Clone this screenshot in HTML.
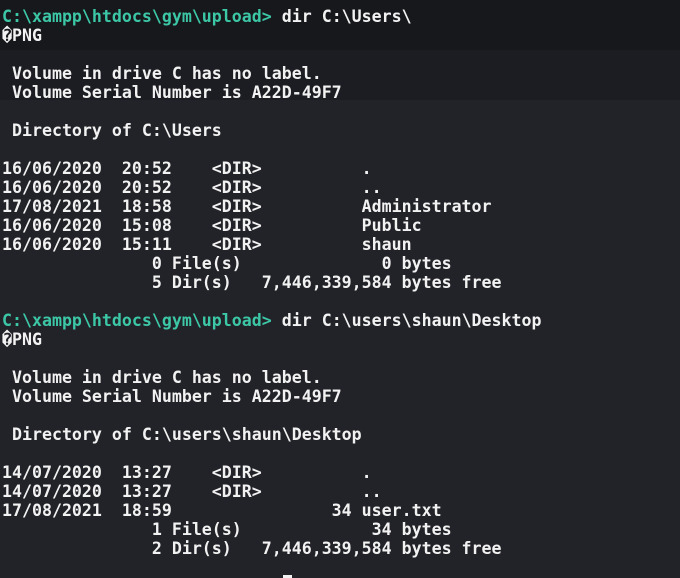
<!DOCTYPE html>
<html><head><meta charset="utf-8"><style>
html,body{margin:0;padding:0;}
body{width:680px;height:578px;overflow:hidden;position:relative;
background:linear-gradient(#17181c 0,#17181c 50px,#1c1d22 50px,#1c1d22 100px,#222328 100px,#222328 100%);}
pre{position:absolute;left:2px;top:7px;margin:0;font-family:"DejaVu Sans Mono","Liberation Mono",monospace;
font-weight:bold;font-size:16.6px;line-height:19px;color:#f2f2f2;letter-spacing:0;}
.p{color:#3cc7a6;}
.cur{position:absolute;left:283px;top:575px;width:9px;height:3px;background:#f2f2f2;}
</style></head><body>
<pre><span class="p">C:\xampp\htdocs\gym\upload&gt;</span> dir C:\Users\
�PNG

 Volume in drive C has no label.
 Volume Serial Number is A22D-49F7

 Directory of C:\Users

16/06/2020  20:52    &lt;DIR&gt;          .
16/06/2020  20:52    &lt;DIR&gt;          ..
17/08/2021  18:58    &lt;DIR&gt;          Administrator
16/06/2020  15:08    &lt;DIR&gt;          Public
16/06/2020  15:11    &lt;DIR&gt;          shaun
               0 File(s)              0 bytes
               5 Dir(s)   7,446,339,584 bytes free

<span class="p">C:\xampp\htdocs\gym\upload&gt;</span> dir C:\users\shaun\Desktop
�PNG

 Volume in drive C has no label.
 Volume Serial Number is A22D-49F7

 Directory of C:\users\shaun\Desktop

14/07/2020  13:27    &lt;DIR&gt;          .
14/07/2020  13:27    &lt;DIR&gt;          ..
17/08/2021  18:59                34 user.txt
               1 File(s)             34 bytes
               2 Dir(s)   7,446,339,584 bytes free
</pre>
<div class="cur"></div>
</body></html>
